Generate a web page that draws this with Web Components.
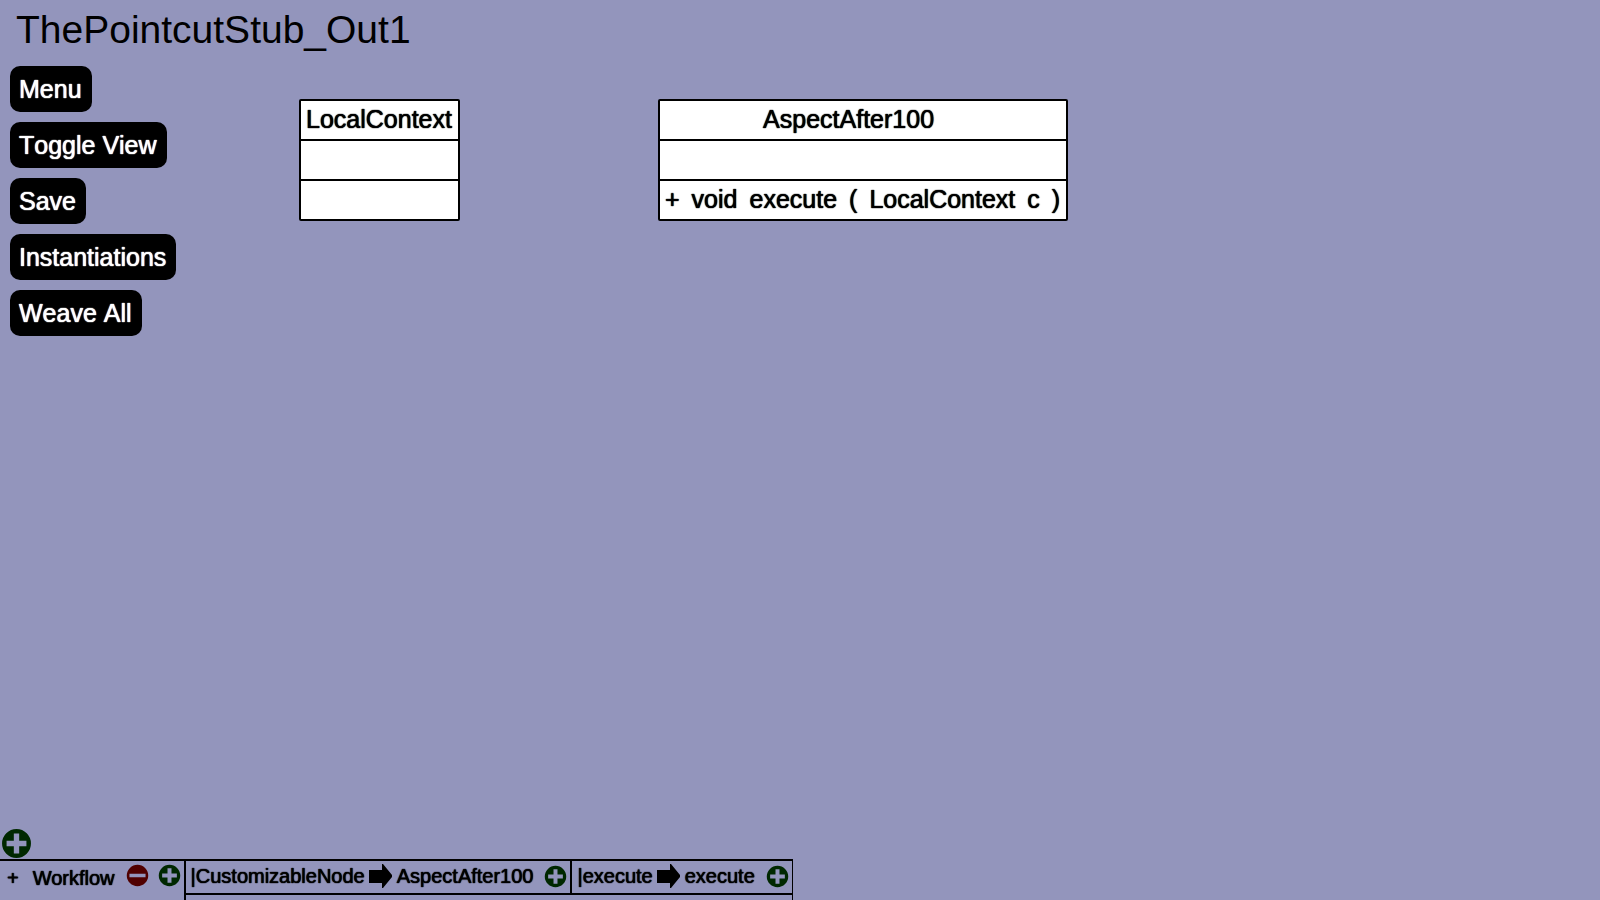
<!DOCTYPE html>
<html lang="en">
<head>
<meta charset="utf-8">
<meta name="viewport" content="width=device-width, initial-scale=1">
<title>ThePointcutStub_Out1</title>
<style>
  html, body { margin: 0; height: 100%; }
  body { background: #9395bc; color: #000; font-family: "Liberation Sans", Arial, sans-serif; overflow: hidden; }
</style>
</head>
<body>
<aspect-editor>
  <h1 slot="title">ThePointcutStub_Out1</h1>
  <tool-button slot="tools">Menu</tool-button>
  <tool-button slot="tools">Toggle View</tool-button>
  <tool-button slot="tools">Save</tool-button>
  <tool-button slot="tools">Instantiations</tool-button>
  <tool-button slot="tools">Weave All</tool-button>
  <class-node slot="nodes" style="left: 299px; top: 99px">
    <span slot="name">LocalContext</span>
  </class-node>
  <class-node slot="nodes" style="left: 658px; top: 99px; --name-trail: 28px">
    <span slot="name">AspectAfter100</span>
    <span slot="methods">+</span>
    <span slot="methods">void</span>
    <span slot="methods">execute</span>
    <span slot="methods">(</span>
    <span slot="methods">LocalContext</span>
    <span slot="methods">c</span>
    <span slot="methods">)</span>
  </class-node>
  <round-button slot="add" kind="plus" label="Add instantiation" size="large"></round-button>
  <workflow-panel slot="panel" name="Workflow">
    <mapping-cell from="CustomizableNode" to="AspectAfter100"></mapping-cell>
    <mapping-cell from="execute" to="execute"></mapping-cell>
  </workflow-panel>
</aspect-editor>

<script>
  class Base extends HTMLElement {
    connectedCallback() {
      if (!this.shadowRoot) this.attachShadow({ mode: 'open' }).innerHTML = this.view();
    }
  }

  customElements.define('aspect-editor', class extends Base {
    view() {
      return `<style>
        :host { display: flex; flex-direction: column; height: 100vh; position: relative; }
        ::slotted(h1) { margin: 0; padding: 8px 16px 10px; font-size: 39px; font-weight: 400; line-height: 44px; }
        nav { display: flex; flex-direction: column; align-items: flex-start; gap: 10px; padding: 4px 10px; }
        main { flex: 1; min-height: 0; }
        .add { padding: 0 1px; display: flex; }
      </style>
      <header><slot name="title"></slot></header>
      <nav aria-label="Tools"><slot name="tools"></slot></nav>
      <main><slot name="nodes"></slot></main>
      <div class="add"><slot name="add"></slot></div>
      <slot name="panel"></slot>`;
    }
  });

  customElements.define('tool-button', class extends Base {
    view() {
      return `<style>
        :host { display: block; }
        button { display: block; height: 46px; padding: 0 10px 0 9px; border: 0; border-radius: 10px; background: #000;
          color: #fff; font: 25px/44px "Liberation Sans", Arial, sans-serif; font-kerning: none;
          text-shadow: 0 0 1px #fff, 0 0 1px #fff; white-space: nowrap; }
      </style><button type="button"><slot></slot></button>`;
    }
  });

  customElements.define('class-node', class extends Base {
    view() {
      return `<style>
        :host { display: grid; grid-auto-rows: 38px; gap: 2px; position: absolute; box-sizing: border-box;
          border: 2px solid #000; border-radius: 2px; background: #000; font-size: 25px; line-height: 37px;
          text-shadow: 0 0 1px #000, 0 0 1px #000; white-space: nowrap; }
        div { background: #fff; display: flex; gap: 12px; padding: 0 6px 0 5px; }
        .name { justify-content: center; padding-right: calc(6px + var(--name-trail, 0px)); }
      </style>
      <div class="name"><slot name="name"></slot></div>
      <div><slot name="attributes"></slot></div>
      <div><slot name="methods"></slot></div>`;
    }
  });

  customElements.define('round-button', class extends Base {
    view() {
      const plus = this.getAttribute('kind') === 'plus';
      const size = this.getAttribute('size') === 'large' ? 31 : 23;
      const hole = plus
        ? 'M12.4 5.4h5.2v7h7v5.2h-7v7h-5.2v-7h-7v-5.2h7z'
        : 'M4.5 12.8h21v4.4h-21z';
      return `<style>
        :host { display: block; flex: none; }
        button { display: block; padding: 0; border: 0; background: none; }
        svg { display: block; }
      </style>
      <button type="button" aria-label="${this.getAttribute('label')}">
        <svg width="${size}" height="${size}" viewBox="0 0 30 30" aria-hidden="true">
          <path fill="${plus ? '#002800' : '#500000'}" fill-rule="evenodd" d="M15 1a14 14 0 1 1 0 28a14 14 0 1 1 0-28z${hole}"/>
        </svg>
      </button>`;
    }
  });

  customElements.define('mapping-cell', class extends Base {
    view() {
      return `<style>
        :host { display: flex; align-items: center; height: 32px; padding: 0 3px 0 5px; border-bottom: 2px solid #000; }
        :host(:not(:last-child)) { border-right: 2px solid #000; }
        span { line-height: 30px; height: 32px; }
        svg { margin: 0 5px 2px 4px; flex: none; }
        round-button { margin: 0 0 2px 11px; }
      </style>
      <span>|${this.getAttribute('from')}</span>
      <svg width="23" height="24" viewBox="0 0 23 24" role="img" aria-label="maps to"><path d="M0 6h13V0h1l9 11v2l-9 11h-1v-5H0z"/></svg>
      <span>${this.getAttribute('to')}</span>
      <round-button kind="plus" label="Add mapping"></round-button>`;
    }
  });

  customElements.define('workflow-panel', class extends Base {
    view() {
      return `<style>
        :host { display: flex; align-self: flex-start; height: 39px; border-top: 2px solid #000;
          font-size: 20px; text-shadow: 0 0 1px #000, 0 0 1px #000; white-space: nowrap; }
        .head { display: flex; align-items: flex-start; padding: 0 3px 0 7px; border-right: 2px solid #000; }
        .head span { line-height: 34px; }
        .name { margin: 0 11px 0 14px; }
        .icons { display: flex; gap: 9px; padding-top: 3px; }
        .cells { display: flex; align-items: flex-start; border-right: 1px solid #000; }
      </style>
      <div class="head">
        <span>+</span><span class="name">${this.getAttribute('name')}</span>
        <div class="icons">
          <round-button kind="minus" label="Remove workflow"></round-button>
          <round-button kind="plus" label="Add to workflow"></round-button>
        </div>
      </div>
      <div class="cells"><slot></slot></div>`;
    }
  });
</script>
</body>
</html>
